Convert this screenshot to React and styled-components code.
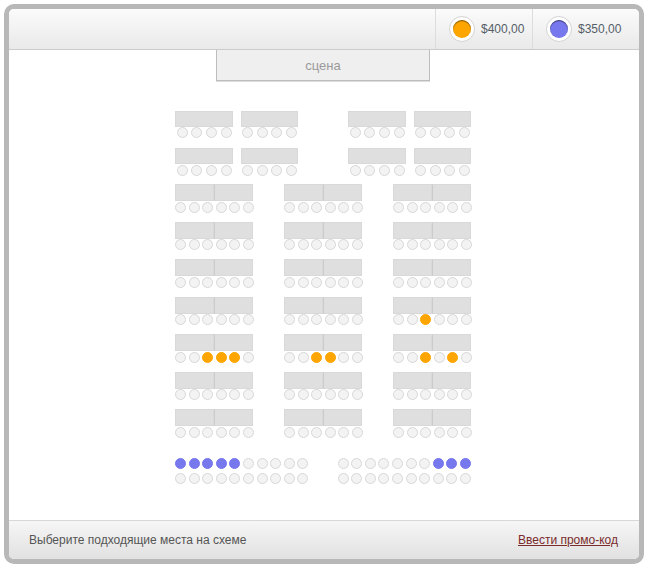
import styled, { createGlobalStyle } from "styled-components";

const GlobalStyle = createGlobalStyle`
  html, body { margin: 0; padding: 0; background: #fff; }
  body { font-family: "Liberation Sans", Arial, sans-serif; }
`;

const Frame = styled.div`
  box-sizing: border-box;
  width: 640px;
  height: 560px;
  margin: 4px;
  border: 5px solid #b8b8b8;
  border-radius: 10px;
  overflow: hidden;
  display: flex;
  flex-direction: column;
  background: #fff;
`;

const Header = styled.header`
  box-sizing: border-box;
  height: 41px;
  flex: none;
  display: flex;
  justify-content: flex-end;
  padding-right: 9px;
  background: linear-gradient(#fbfbfb, #e9e9e9);
  border-bottom: 1px solid #ccc;
`;

const Price = styled.div`
  box-sizing: border-box;
  width: ${(p) => p.$width}px;
  display: flex;
  align-items: center;
  gap: 6px;
  padding-left: 13px;
  border-left: 1px solid #dcdcdc;
  font-size: 12px;
  color: #555e68;
`;

const Swatch = styled.span`
  box-sizing: border-box;
  width: 26px;
  height: 26px;
  border-radius: 50%;
  background: #fff;
  border: 1px solid #d4d4d4;
  display: flex;
  align-items: center;
  justify-content: center;

  &::after {
    content: "";
    width: 18px;
    height: 18px;
    border-radius: 50%;
    background: ${(p) => p.$color};
    box-shadow: inset 0 1px 1px rgba(0, 0, 0, 0.5);
  }
`;

const Stage = styled.div`
  box-sizing: border-box;
  flex: none;
  width: 214px;
  height: 31px;
  margin: 0 0 0 207px;
  display: flex;
  align-items: center;
  justify-content: center;
  background: #efefef;
  border: 1px solid #bdbdbd;
  border-top: none;
  box-shadow: 0 1px 0 #ddd;
  font-size: 13px;
  color: #9a9a9a;
`;

const Hall = styled.main`
  flex: 1;
  display: flex;
  flex-direction: column;
  padding: 29.5px 0 0 166px;
`;

const Row = styled.div`
  display: flex;
  gap: ${(p) => p.$gap}px;
  margin-bottom: ${(p) => p.$after}px;
`;

const Pair = styled.div`
  display: flex;
  gap: 8px;
`;

const Block = styled.div`
  display: flex;
  flex-direction: column;
  align-items: flex-start;
`;

const Table = styled.div`
  box-sizing: border-box;
  width: ${(p) => p.$width}px;
  height: ${(p) => p.$height}px;
  background: #dfdfdf;
  border: 1px solid #d9d9d9;
`;

const Tables = styled.div`
  display: flex;
  & > div + div {
    border-left: 1px solid #cbcbcb;
  }
`;

const Seats = styled.div`
  display: flex;
  gap: ${(p) => p.$gap}px;
  margin: 0.5px 0 0 ${(p) => p.$indent}px;
`;

const SeatDot = styled.span`
  box-sizing: border-box;
  display: block;
  width: 11px;
  height: 11px;
  border-radius: 50%;
  background: ${(p) => p.$color || "#f3f3f3"};
  border: 1px solid ${(p) => p.$color || "#d8d8d8"};
`;

const Balcony = styled.div`
  display: flex;
  justify-content: space-between;
  width: 296px;
  margin-top: 11.7px;
`;

const BalconyBlock = styled.div`
  display: flex;
  flex-direction: column;
  gap: 4px;
`;

const BalconyRow = styled.div`
  display: flex;
  gap: 2.6px;
`;

const Footer = styled.footer`
  box-sizing: border-box;
  height: 39px;
  flex: none;
  display: flex;
  align-items: center;
  justify-content: space-between;
  padding: 0 21px 0 20px;
  background: linear-gradient(#f6f6f6, #e1e1e1);
  border-top: 1px solid #d8d8d8;
  font-size: 12px;
  color: #555;
`;

const PromoLink = styled.a`
  color: #7a2c2c;
  text-decoration: underline;
  cursor: pointer;
`;

const ORANGE = "#ffa500";
const BLUE = "#7777ee";

// seats sold per row: { rowIndex: [block0, block1, block2] }
const sold = {
  3: [[], [], [2]],
  4: [[2, 3, 4], [2, 3], [2, 4]],
};

function SeatRow({ count, gap, indent, taken = [], color = ORANGE }) {
  return (
    <Seats $gap={gap} $indent={indent}>
      {Array.from({ length: count }, (_, i) => (
        <SeatDot key={i} $color={taken.includes(i) ? color : undefined} />
      ))}
    </Seats>
  );
}

function SmallBlock() {
  return (
    <Block>
      <Table $width={57.5} $height={16} />
      <SeatRow count={4} gap={3.7} indent={1.5} />
    </Block>
  );
}

function WideBlock({ taken }) {
  return (
    <Block>
      <Tables>
        <Table $width={39} $height={17} />
        <Table $width={39} $height={17} />
      </Tables>
      <SeatRow count={6} gap={2.6} indent={0} taken={taken} />
    </Block>
  );
}

function BalconyLine({ from = 0, to = 0 }) {
  return (
    <BalconyRow>
      {Array.from({ length: 10 }, (_, i) => (
        <SeatDot key={i} $color={i >= from && i < to ? BLUE : undefined} />
      ))}
    </BalconyRow>
  );
}

export default function App() {
  return (
    <>
      <GlobalStyle />
      <Frame>
        <Header>
          <Price $width={97}>
            <Swatch $color={ORANGE} />
            $400,00
          </Price>
          <Price $width={98}>
            <Swatch $color={BLUE} />
            $350,00
          </Price>
        </Header>
        <Stage>сцена</Stage>
        <Hall>
          {[0, 1].map((r) => (
            <Row key={r} $gap={50} $after={r === 0 ? 10 : 8.5}>
              <Pair>
                <SmallBlock />
                <SmallBlock />
              </Pair>
              <Pair>
                <SmallBlock />
                <SmallBlock />
              </Pair>
            </Row>
          ))}
          {Array.from({ length: 7 }, (_, r) => (
            <Row key={r} $gap={30} $after={9}>
              {[0, 1, 2].map((b) => (
                <WideBlock key={b} taken={sold[r]?.[b] ?? []} />
              ))}
            </Row>
          ))}
          <Balcony>
            <BalconyBlock>
              <BalconyLine from={0} to={5} />
              <BalconyLine />
            </BalconyBlock>
            <BalconyBlock>
              <BalconyLine from={7} to={10} />
              <BalconyLine />
            </BalconyBlock>
          </Balcony>
        </Hall>
        <Footer>
          <span>Выберите подходящие места на схеме</span>
          <PromoLink>Ввести промо-код</PromoLink>
        </Footer>
      </Frame>
    </>
  );
}
